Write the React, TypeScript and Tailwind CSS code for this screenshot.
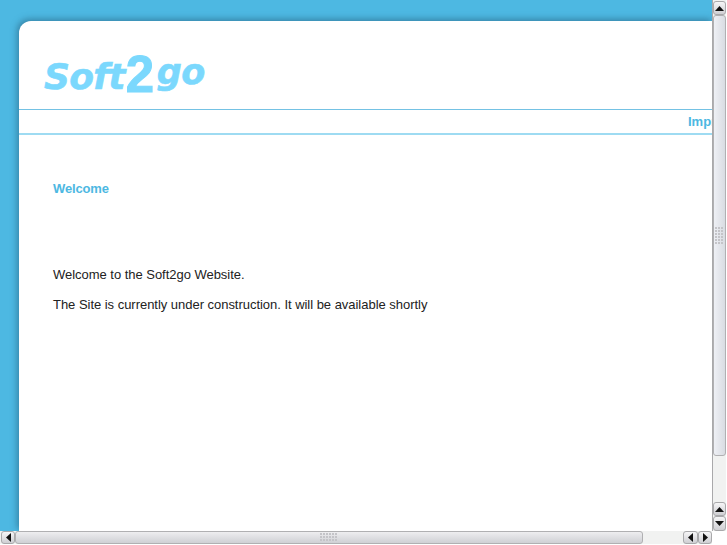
import React from "react";

const Tri = ({ dir }: { dir: "up" | "down" | "left" | "right" }) => {
  const pts = { up: "0,5 9,5 4.5,0", down: "0,0 9,0 4.5,5", left: "5,0 5,9 0,4.5", right: "0,0 0,9 5,4.5" }[dir];
  const v = dir === "up" || dir === "down";
  return (
    <svg width={v ? 9 : 5} height={v ? 5 : 9} viewBox={v ? "0 0 9 5" : "0 0 5 9"}>
      <polygon points={pts} fill="#111" />
    </svg>
  );
};

const Btn = ({ dir, className }: { dir: "up" | "down" | "left" | "right"; className: string }) => (
  <div className={`flex shrink-0 items-center justify-center rounded-[3px] border border-[#a9a9ab] bg-gradient-to-b from-[#f6f6f7] to-[#cfcfd3] ${className}`}>
    <Tri dir={dir} />
  </div>
);

const Grip = ({ cols, rows }: { cols: number; rows: number }) => (
  <svg width={cols * 3} height={rows * 3}>
    {Array.from({ length: cols * rows }).map((_, i) => (
      <rect key={i} x={(i % cols) * 3} y={Math.floor(i / cols) * 3} width={2} height={2} fill="#c4c4c8" />
    ))}
  </svg>
);

export default function App() {
  return (
    <div className="flex h-[545px] w-[727px] flex-col overflow-hidden bg-white font-['Liberation_Sans',sans-serif]">
      <div className="flex h-[531px] shrink-0">
        <main className="w-[713px] shrink-0 overflow-hidden border-r border-[#a9a9ab] bg-[#4db8e2] pl-[19px] pt-[21px]">
          <div className="h-full w-[694px] overflow-hidden rounded-tl-[12px] bg-white shadow-[-2px_-2px_6px_rgba(40,100,130,0.6)]">
            <header className="relative h-[88px]">
              <div className="absolute left-[25px] top-[37px] flex h-[38px] items-end font-['DejaVu_Sans',sans-serif] font-bold italic leading-none text-[#7bd8fd]">
                <span className="text-[36px] leading-[38px] tracking-[-0.7px] [-webkit-text-stroke:0.6px_#7bd8fd]">Soft</span>
                <span className="relative -top-[2px] ml-px mr-[3px] font-['Liberation_Sans',sans-serif] text-[51px] not-italic leading-[38px] tracking-[-0.3px] [-webkit-text-stroke:1px_#7bd8fd]">2</span>
                <span className="relative -top-[5px] text-[35px] leading-[38px] tracking-[-0.5px] [-webkit-text-stroke:0.6px_#7bd8fd]">go</span>
              </div>
            </header>
            <nav className="flex h-[26px] items-center justify-end overflow-hidden border-t border-b-2 border-t-[#74c2e4] border-b-[#9edbf2]">
              <span className="w-[25px] overflow-hidden whitespace-nowrap text-[13px] font-bold text-[#4db8e2]">Impressum</span>
            </nav>
            <section className="pl-[34px] pt-[45px] text-[13px] tracking-[-0.03px] text-[#222]">
              <h1 className="text-[13px] font-bold leading-[18px] tracking-[-0.15px] text-[#4db8e2]">Welcome</h1>
              <p className="mt-[68px] leading-[18px]">Welcome to the Soft2go Website.</p>
              <p className="mt-[12px] leading-[18px]">The Site is currently under construction. It will be available shortly</p>
            </section>
          </div>
        </main>
        <div className="flex w-[13px] flex-col bg-[#f1f2f1] pt-px">
          <Btn dir="up" className="h-[14px]" />
          <div className="flex h-[441px] shrink-0 items-center justify-center rounded-[3px] border border-[#b0b0b2] bg-gradient-to-r from-[#eef0f5] to-[#d9dce2]">
            <Grip cols={3} rows={6} />
          </div>
          <div className="flex-1" />
          <Btn dir="up" className="h-[14px]" />
          <Btn dir="down" className="h-[15px]" />
        </div>
      </div>
      <div className="flex h-[13px] w-[712px] shrink-0 items-stretch bg-[#f1f2f1]">
        <Btn dir="left" className="ml-px w-[14px]" />
        <div className="flex w-[628px] shrink-0 items-center justify-center rounded-[3px] border border-[#b0b0b2] bg-gradient-to-b from-[#eeeef0] to-[#cfd0d4]">
          <Grip cols={6} rows={3} />
        </div>
        <div className="flex-1" />
        <Btn dir="left" className="w-[15px]" />
        <Btn dir="right" className="w-[14px]" />
      </div>
    </div>
  );
}
